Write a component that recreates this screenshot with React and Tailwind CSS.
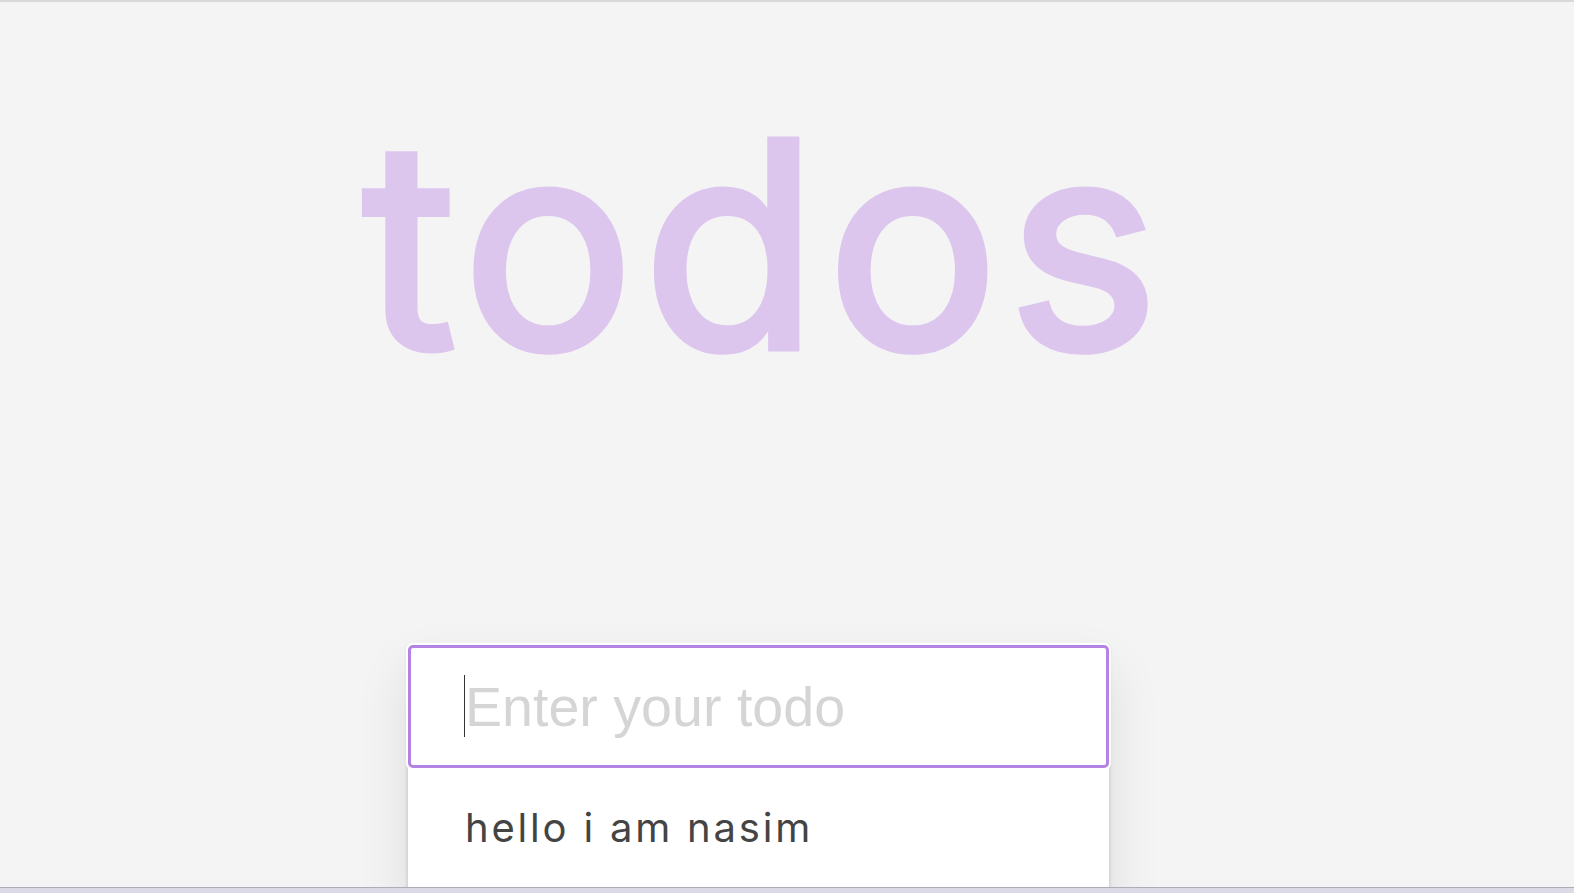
import React from "react";

export default function App() {
  return (
    <div className="h-[893px] w-full flex flex-col bg-[#f4f4f4] overflow-hidden border-t-2 border-[#d9d9d9]">
      <div className="flex-1 overflow-hidden">
        <div className="ml-[408px] w-[701px] flex flex-col">
          <div className="mt-[99px] pl-[13px] flex justify-center">
            <h1
              className="shrink-0 whitespace-nowrap text-[286px] leading-[286px] font-normal tracking-[9px] text-[#dcc6ee] [-webkit-text-stroke-width:7px] [-webkit-text-stroke-color:#dcc6ee] select-none"
              style={{ fontFamily: "Inter, 'Noto Sans', sans-serif" }}
            >
              todos
            </h1>
          </div>
          <div className="mt-[258px] relative bg-white shadow-[0_2px_4px_rgba(0,0,0,0.2),0_25px_50px_rgba(0,0,0,0.1)]">
            <div className="relative">
              <input
                type="text"
                placeholder="Enter your todo"
                className="block w-full h-[123px] pl-[54px] pr-4 bg-white border-[3px] border-[#b584e3] rounded-[5px] shadow-[0_0_0_2px_#ffffff] outline-none text-[55.6px] text-[#444] placeholder:text-[#d5d5d5]"
                style={{ fontFamily: "'Liberation Sans', Arial, sans-serif" }}
              />
              <span className="absolute left-[56px] top-[30px] w-px h-[62px] bg-[#333]" />
            </div>
            <ul>
              <li
                className="pl-[57px] pt-[30px] pb-[40px] text-[40px] text-[#444] tracking-[2.8px]"
                style={{ fontFamily: "Inter, 'Noto Sans', sans-serif" }}
              >
                hello i am nasim
              </li>
            </ul>
          </div>
        </div>
      </div>
      <div className="h-[6px] shrink-0 border-t border-[#aeadb6] bg-[#dcdae6]" />
    </div>
  );
}
